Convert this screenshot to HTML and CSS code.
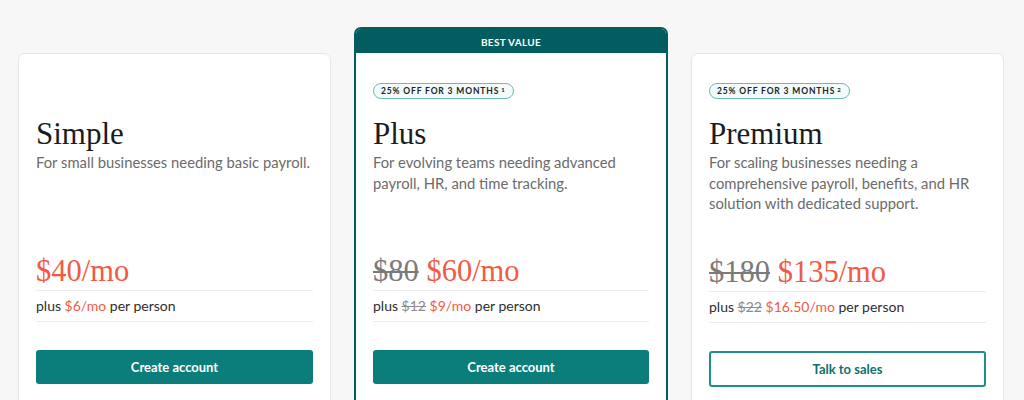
FILE: index.html
```html
<!DOCTYPE html>
<html lang="en">
<head>
<meta charset="utf-8">
<title>Plans</title>
<link rel="stylesheet" href="styles.css">
</head>
<body>
<div class="plans">
  <section class="card">
    <div class="badge-row"><span class="badge is-empty">&nbsp;</span></div>
    <h2 class="title">Simple</h2>
    <p class="desc">For small businesses needing basic payroll.</p>
    <div class="price"><span class="now">$40/mo</span></div>
    <div class="per">plus <span class="hl">$6/mo</span> per person</div>
    <a class="btn btn-solid" href="#">Create account</a>
  </section>

  <section class="card featured">
    <div class="ribbon">BEST VALUE</div>
    <div class="body">
      <div class="badge-row"><span class="badge">25% OFF FOR 3 MONTHS <sup>1</sup></span></div>
      <h2 class="title">Plus</h2>
      <p class="desc">For evolving teams needing advanced payroll, HR, and time tracking.</p>
      <div class="price"><s class="was">$80</s> <span class="now">$60/mo</span></div>
      <div class="per">plus <s class="was-sm">$12</s> <span class="hl">$9/mo</span> per person</div>
      <a class="btn btn-solid" href="#">Create account</a>
    </div>
  </section>

  <section class="card">
    <div class="badge-row"><span class="badge">25% OFF FOR 3 MONTHS <sup>2</sup></span></div>
    <h2 class="title">Premium</h2>
    <p class="desc">For scaling businesses needing a comprehensive payroll, benefits, and HR solution with dedicated support.</p>
    <div class="price"><s class="was">$180</s> <span class="now">$135/mo</span></div>
    <div class="per">plus <s class="was-sm">$22</s> <span class="hl">$16.50/mo</span> per person</div>
    <a class="btn btn-outline" href="#">Talk to sales</a>
  </section>
</div>
</body>
</html>
```

FILE: styles.css
```css
* { box-sizing: border-box; }
html, body { margin: 0; padding: 0; }
body {
  background: #f7f7f7;
  font-family: "Lato", "Noto Sans", sans-serif;
  color: #333;
}
.plans {
  display: grid;
  grid-template-columns: 313px 314px 313px;
  column-gap: 23px;
  padding: 27px 20px 0 18px;
  align-items: start;
}
.card {
  background: #fff;
  border: 1px solid #e6e6e6;
  border-radius: 7px;
  margin-top: 26px;
  padding: 26px 17px 60px;
}
.card.featured {
  margin-top: 0;
  padding: 0;
  border: 2px solid #035d60;
  overflow: hidden;
}
.featured .body {
  padding: 27px 17px 60px;
}
.ribbon {
  background: #035d60;
  color: #fff;
  height: 24px;
  line-height: 26px;
  text-align: center;
  font-size: 10px;
  font-weight: 700;
  letter-spacing: 0.3px;
}
.badge-row {
  height: 19px;
  padding-top: 2px;
  display: flex;
  align-items: center;
}
.badge {
  display: inline-flex;
  align-items: center;
  height: 16px;
  padding: 0 7px;
  border: 1.5px solid #6db9b6;
  border-radius: 9px;
  background: #f2fafa;
  color: #222;
  font-size: 8.5px;
  font-weight: 700;
  letter-spacing: 0.85px;
}
.badge sup { font-size: 6px; margin-left: 2px; position: relative; top: -1px; vertical-align: baseline; }
.badge.is-empty { visibility: hidden; }
.title {
  margin: 17px 0 0;
  font-family: "Liberation Serif", "Times New Roman", serif;
  font-weight: 400;
  font-size: 31px;
  line-height: 36px;
  color: #1c1c1c;
}
.desc {
  margin: 0;
  min-height: 61px;
  font-size: 14.8px;
  line-height: 20.5px;
  color: #6b6b6b;
}
.price {
  margin-top: 41px;
  font-family: "Liberation Serif", "Times New Roman", serif;
  font-size: 30.5px;
  line-height: 34px;
  padding-bottom: 2px;
  border-bottom: 1px solid #ececec;
  white-space: nowrap;
}
.price .now { color: #f25a45; }
.price .was { color: #7a7a7a; text-decoration: line-through; text-decoration-thickness: 2px; }
.per {
  font-size: 14px;
  line-height: 30px;
  color: #2e2e2e;
  border-bottom: 1px solid #ececec;
}
.per .hl { color: #f25a45; }
.per .was-sm { color: #8a8a8a; }
.btn {
  display: flex;
  align-items: center;
  justify-content: center;
  margin-top: 28px;
  height: 34px;
  border-radius: 3px;
  font-size: 13px;
  font-weight: 700;
  text-decoration: none;
}
.btn-solid {
  background: #0b7e7b;
  color: #fff;
}
.btn-outline {
  border: 2px solid #1e8f8b;
  color: #0f6f6d;
  height: 36px;
}
```
